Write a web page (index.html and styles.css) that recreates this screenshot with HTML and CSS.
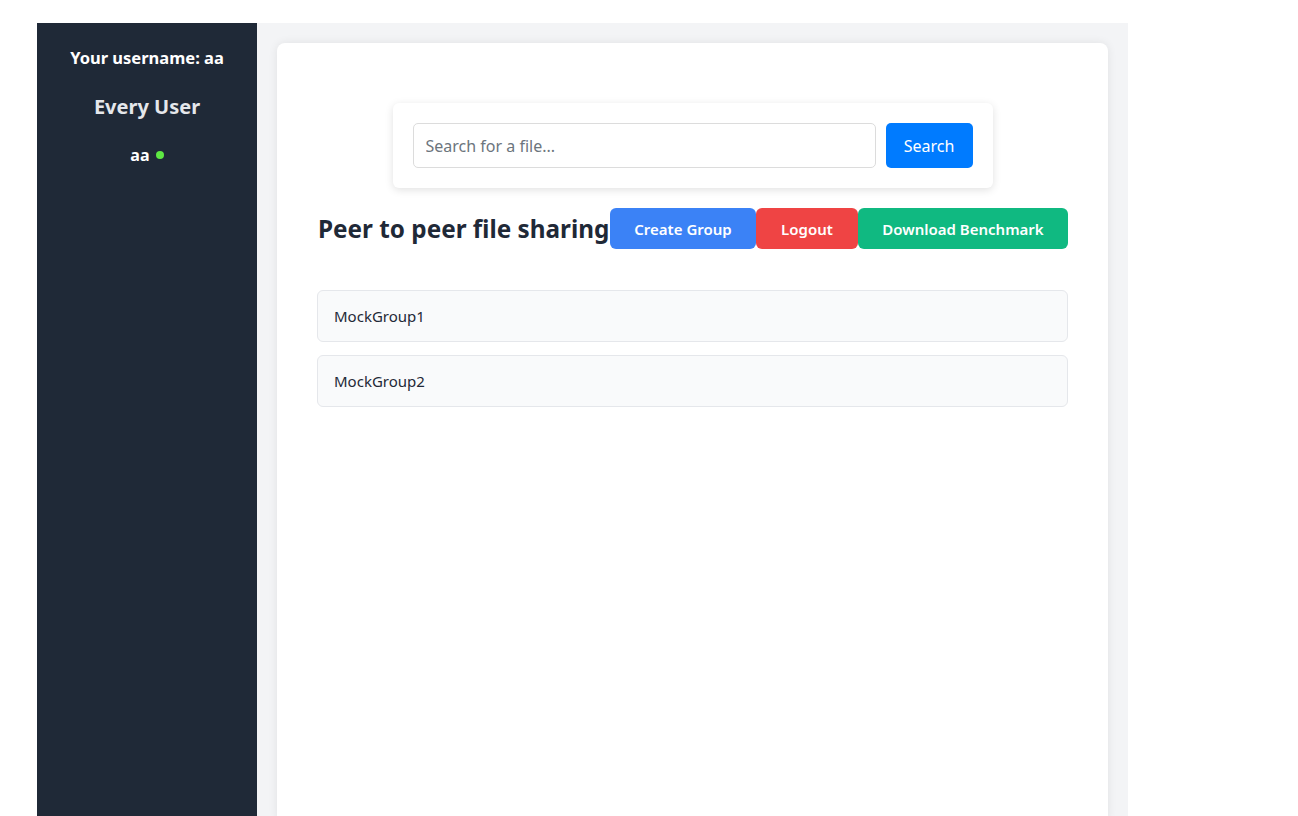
FILE: index.html
```html
<!DOCTYPE html>
<html lang="en">
<head>
<meta charset="utf-8">
<title>Peer to peer file sharing</title>
<link rel="stylesheet" href="styles.css">
</head>
<body>
<div class="app">
  <aside class="sidebar">
    <div class="username">Your username: aa</div>
    <h2 class="users-title">Every User</h2>
    <ul class="user-list">
      <li class="user">aa <span class="dot"></span></li>
    </ul>
  </aside>
  <main class="main">
    <section class="card">
      <div class="search-box">
        <input class="search-input" type="text" placeholder="Search for a file...">
        <button class="search-btn">Search</button>
      </div>
      <div class="header-row">
        <h1 class="title">Peer to peer file sharing</h1>
        <div class="actions">
          <button class="btn btn-blue">Create Group</button>
          <button class="btn btn-red">Logout</button>
          <button class="btn btn-green">Download Benchmark</button>
        </div>
      </div>
      <ul class="groups">
        <li class="group">MockGroup1</li>
        <li class="group">MockGroup2</li>
      </ul>
    </section>
  </main>
</div>
</body>
</html>
```
FILE: styles.css
```css
* { box-sizing: border-box; }
html, body { margin: 0; padding: 0; background: #ffffff; }
body {
  font-family: "Noto Sans", "Open Sans", sans-serif;
  padding: 23px 0 0 37px;
  height: 816px;
  overflow: hidden;
}
.app {
  display: flex;
  width: 1091px;
  min-height: 793px;
}
.sidebar {
  width: 220px;
  flex: none;
  background: #1f2937;
  color: #ffffff;
  text-align: center;
  padding-top: 23px;
}
.username {
  font-weight: 700;
  font-size: 16.5px;
  line-height: 24px;
}
.users-title {
  margin: 23px 0 0;
  font-size: 20px;
  line-height: 28px;
  font-weight: 700;
  color: #e5e7eb;
}
.user-list {
  list-style: none;
  margin: 22px 0 0;
  padding: 0;
}
.user {
  font-weight: 700;
  font-size: 16px;
  line-height: 24px;
}
.dot {
  display: inline-block;
  width: 8px;
  height: 8px;
  border-radius: 50%;
  background: #5ee843;
  vertical-align: 2px;
  margin-left: 2px;
}
.main {
  flex: 1;
  background: #f3f4f6;
  padding: 20px 20px 0;
}
.card {
  background: #ffffff;
  border-radius: 8px;
  box-shadow: 0 0 10px rgba(0,0,0,0.08);
  min-height: 780px;
  padding: 60px 40px 40px 40px;
}
.search-box {
  width: 600px;
  margin: 0 auto;
  background: #ffffff;
  border-radius: 6px;
  box-shadow: 0 2px 8px rgba(0,0,0,0.12);
  padding: 20px;
  display: flex;
  gap: 10px;
}
.search-input {
  flex: 1;
  height: 45px;
  border: 1px solid #dcdcdc;
  border-radius: 5px;
  padding: 0 12px;
  font-family: inherit;
  font-size: 16px;
  color: #333;
}
.search-input::placeholder { color: #6c757d; }
.search-btn {
  width: 87px;
  height: 45px;
  border: none;
  border-radius: 5px;
  background: #007bff;
  color: #ffffff;
  font-family: inherit;
  font-size: 16px;
}
.header-row {
  display: flex;
  align-items: center;
  margin-top: 20px;
}
.title {
  flex: 1;
  margin: 0 0 0 1px;
  font-size: 24.3px;
  font-weight: 700;
  color: #1f2937;
  white-space: nowrap;
}
.actions { display: flex; }
.btn {
  height: 41px;
  border: none;
  border-radius: 6px;
  color: #ffffff;
  font-family: inherit;
  font-size: 15px;
  font-weight: 600;
  padding: 0 24px;
}
.btn-blue { background: #3b82f6; width: 146px; }
.btn-red { background: #ef4444; width: 102px; }
.btn-green { background: #10b981; width: 210px; }
.groups {
  list-style: none;
  margin: 41px 0 0;
  padding: 0;
  display: flex;
  flex-direction: column;
  gap: 13px;
}
.group {
  height: 52px;
  display: flex;
  align-items: center;
  padding: 0 16px;
  background: #f9fafb;
  border: 1px solid #e5e7eb;
  border-radius: 6px;
  font-size: 15px;
  color: #1f2937;
}
```
